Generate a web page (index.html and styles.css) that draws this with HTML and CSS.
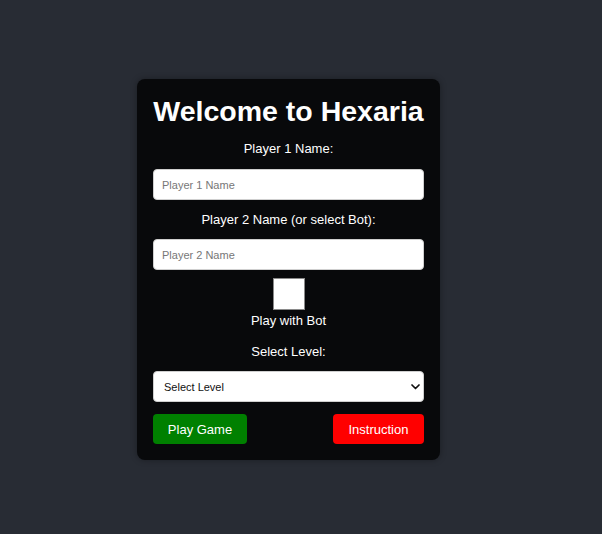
FILE: index.html
```html
<!DOCTYPE html>
<html lang="en">
<head>
<meta charset="utf-8">
<title>Hexaria</title>
<link rel="stylesheet" href="styles.css">
</head>
<body>
<div class="card">
  <h1 class="title">Welcome to Hexaria</h1>
  <label class="label label-first" for="p1">Player 1 Name:</label>
  <input class="field" id="p1" type="text" placeholder="Player 1 Name">
  <label class="label label-second" for="p2">Player 2 Name (or select Bot):</label>
  <input class="field" id="p2" type="text" placeholder="Player 2 Name">
  <input class="bot-check" id="bot" type="checkbox">
  <label class="bot-label" for="bot">Play with Bot</label>
  <label class="label label-level" for="lvl">Select Level:</label>
  <div class="select-wrap">
    <select class="field select" id="lvl">
      <option>Select Level</option>
      <option>Easy</option>
      <option>Medium</option>
      <option>Hard</option>
    </select>
    <svg class="chev" width="9" height="6" viewBox="0 0 9 6"><path d="M1 1 L4.5 4.5 L8 1" fill="none" stroke="#111" stroke-width="1.7" stroke-linecap="round" stroke-linejoin="round"/></svg>
  </div>
  <div class="actions">
    <button class="btn btn-play" type="button">Play Game</button>
    <button class="btn btn-help" type="button">Instruction</button>
  </div>
</div>
</body>
</html>
```
FILE: styles.css
```css
html, body {
  margin: 0;
  padding: 0;
}
body {
  background: #282c34;
  min-height: 534px;
  font-family: "Liberation Sans", Arial, sans-serif;
  padding: 79px 0 0 137px;
  box-sizing: border-box;
}
.card {
  width: 303px;
  box-sizing: border-box;
  background: #08090b;
  border-radius: 8px;
  padding: 16px 16px 16px;
  display: flex;
  flex-direction: column;
  align-items: center;
  box-shadow: 0 0 6px rgba(0,0,0,0.35);
}
.title {
  margin: 0;
  font-size: 28.5px;
  line-height: 32px;
  font-weight: bold;
  color: #ffffff;
  text-align: center;
  white-space: nowrap;
}
.label {
  display: block;
  color: #ffffff;
  font-size: 13px;
  line-height: 15px;
  text-align: center;
}
.label-first {
  margin: 14px 0 13px;
}
.label-second {
  margin: 12px 0 12px;
}
.label-level {
  margin: 16px 0 12px;
}
.field {
  display: block;
  width: 100%;
  height: 31px;
  box-sizing: border-box;
  margin: 0;
  border: 1px solid #cfcfcf;
  border-radius: 4px;
  background: #ffffff;
  padding: 0 8px;
  font-family: "Liberation Sans", Arial, sans-serif;
  font-size: 11px;
  color: #111;
  outline: none;
}
.field::placeholder {
  color: #777777;
}
.bot-check {
  appearance: none;
  -webkit-appearance: none;
  width: 32px;
  height: 32px;
  margin: 8px 0 0;
  background: #ffffff;
  border: 1px solid #8a8a8a;
  border-radius: 0;
  box-sizing: border-box;
}
.bot-label {
  display: block;
  margin-top: 3px;
  color: #ffffff;
  font-size: 13px;
  line-height: 15px;
  text-align: center;
}
.select-wrap {
  position: relative;
  width: 100%;
}
.select {
  appearance: none;
  -webkit-appearance: none;
  padding: 0 10px;
  color: #111;
  font-size: 11px;
}
.chev {
  position: absolute;
  right: 4px;
  top: 13px;
  pointer-events: none;
}
.actions {
  width: 100%;
  display: flex;
  justify-content: space-between;
  margin-top: 12px;
}
.btn {
  height: 30px;
  border: none;
  border-radius: 4px;
  color: #ffffff;
  font-family: "Liberation Sans", Arial, sans-serif;
  font-size: 13px;
  padding: 0;
  white-space: nowrap;
  text-align: center;
  cursor: pointer;
}
.btn-play {
  background: #008000;
  width: 94px;
}
.btn-help {
  background: #ff0000;
  width: 91px;
}
```
